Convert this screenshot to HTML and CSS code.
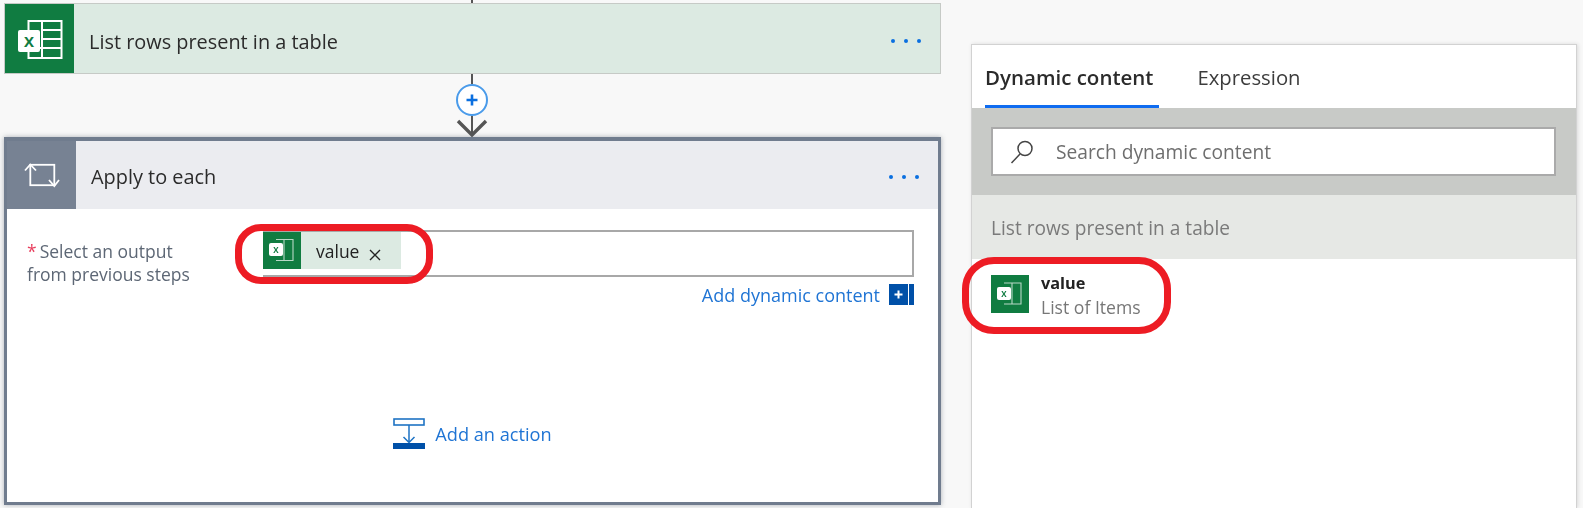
FILE: index.html
```html
<!DOCTYPE html>
<html lang="en">
<head>
<meta charset="utf-8">
<title>Apply to each</title>
<link rel="stylesheet" href="styles.css">
</head>
<body>
<main class="canvas">
  <section class="flow">
    <div class="stub"></div>
    <article class="card card-excel">
      <div class="card-icon card-icon-excel">
        <svg width="68" height="68" viewBox="1 1 68 68">
          <rect x="23.500" y="17" width="33" height="37" fill="none" stroke="#fff" stroke-width="2"/>
          <path d="M37 17v37M37 26h19M37 35h19M37 44h19M24 44h13" stroke="#fff" stroke-width="2" fill="none"/>
          <rect x="13" y="26" width="22" height="22" rx="2" fill="#fff"/>
          <text x="24" y="42.500" class="xl-x">X</text>
        </svg>
      </div>
      <h2 class="card-title">List rows present in a table</h2>
      <div class="dots"><i></i><i></i><i></i></div>
    </article>
    <div class="connector">
      <span class="plus">
        <svg width="16" height="16" viewBox="0 0 16 16"><path d="M8 2.500v11M2.500 8h11" stroke="#0a6fe0" stroke-width="2.600"/></svg>
      </span>
      <svg class="arrow" width="32" height="21" viewBox="0 0 32 21"><path d="M16 0v18" stroke="#555" stroke-width="2"/><path d="M2 5l14 14L30 5" fill="none" stroke="#555" stroke-width="3.400"/></svg>
    </div>
    <article class="card card-loop">
      <header class="loop-head">
        <div class="card-icon card-icon-loop">
          <svg width="36" height="26" viewBox="0 0 36 26" fill="none" stroke="#fff" stroke-width="1.800">
            <rect x="6.300" y="2.800" width="24" height="20.400"/>
            <path d="M1 8.500l5.300-6 5.700 6M25 18l5.300 6 4.700-6"/>
          </svg>
        </div>
        <h2 class="card-title">Apply to each</h2>
        <div class="dots"><i></i><i></i><i></i></div>
      </header>
      <div class="loop-body">
        <div class="form-row">
          <label class="form-label"><span class="req">*</span>Select an output<br>from previous steps</label>
          <div class="form-side">
            <div class="field">
              <span class="chip">
                <span class="chip-icon">
                  <svg width="38" height="37" viewBox="0 0 38 37">
                    <path d="M13 7.500h17v21H13M21 7.500v21" fill="none" stroke="#fff" stroke-opacity=".7" stroke-width="1.100"/>
                    <rect x="6" y="11" width="14" height="13" rx="2" fill="#fff"/>
                    <text x="13" y="21" class="xl-small-x">X</text>
                  </svg>
                </span>
                <span class="chip-text">value</span>
                <span class="chip-x">
                  <svg width="12" height="12" viewBox="0 0 12 12"><path d="M1 1l10 10M11 1L1 11" stroke="#222" stroke-width="1.400"/></svg>
                </span>
              </span>
              <span class="ring ring-chip"></span>
            </div>
            <div class="add-dyn">
              <span>Add dynamic content</span>
              <span class="add-dyn-icon">
                <svg width="25" height="21" viewBox="0 0 25 21"><rect width="19" height="21" fill="#0050a8"/><rect x="20" width="5" height="21" fill="#0050a8"/><path d="M9.500 6.500v8M5.500 10.500h8" stroke="#fff" stroke-width="2"/></svg>
              </span>
            </div>
          </div>
        </div>
        <div class="add-action">
          <svg width="32" height="32" viewBox="0 0 32 32" fill="none">
            <rect x="1" y="1" width="30" height="6" fill="#fff" stroke="#1e73c4" stroke-width="1.600"/>
            <path d="M16 7v17M10.500 19l5.500 5.500 5.500-5.500" stroke="#1e73c4" stroke-width="1.500"/>
            <rect x="0" y="25" width="32" height="6" fill="#0050a8"/>
          </svg>
          <span>Add an action</span>
        </div>
      </div>
    </article>
  </section>
  <aside class="panel">
    <nav class="tabs">
      <div class="tab tab-active">Dynamic content</div>
      <div class="tab">Expression</div>
    </nav>
    <div class="search-band">
      <div class="search">
        <svg width="24" height="26" viewBox="0 0 24 26" fill="none" stroke="#444" stroke-width="1.500"><circle cx="15" cy="9.500" r="7"/><path d="M10 15L1.500 24"/></svg>
        <span>Search dynamic content</span>
      </div>
    </div>
    <div class="group-head">List rows present in a table</div>
    <div class="item">
      <span class="item-icon">
        <svg width="38" height="38" viewBox="0 0 38 38">
          <path d="M13 8h17v21H13M21 8v21" fill="none" stroke="#fff" stroke-opacity=".7" stroke-width="1.100"/>
          <rect x="6" y="12" width="14" height="13" rx="2" fill="#fff"/>
          <text x="13" y="22" class="xl-small-x">X</text>
        </svg>
      </span>
      <div class="item-text">
        <div class="item-name">value</div>
        <div class="item-sub">List of Items</div>
      </div>
      <span class="ring ring-item"></span>
    </div>
  </aside>
</main>
</body>
</html>
```
FILE: styles.css
```css
* { box-sizing: border-box; }
html, body { margin: 0; height: 100%; }
body {
  background: #f8f8f8;
  overflow: hidden;
  font-family: "Open Sans", "Noto Sans", sans-serif;
  color: #2b2b2b;
}
svg { display: block; }
.xl-x { font: 700 15px "Open Sans", sans-serif; fill: #107c41; text-anchor: middle; }
.xl-small-x { font: 700 8px "Open Sans", sans-serif; fill: #107c41; text-anchor: middle; }

.canvas { display: flex; align-items: flex-start; height: 508px; filter: blur(.35px); }
.flow { width: 937px; margin-left: 4px; flex: none; display: flex; flex-direction: column; }
.stub { width: 2px; height: 3px; background: #555; margin-left: 467px; }

.card { display: flex; }
.card-excel {
  height: 71px;
  background: #dceae2;
  border: 1px solid #c6cac6;
  align-items: center;
}
.card-icon { flex: none; display: flex; align-items: center; justify-content: center; }
.card-icon-excel { width: 69px; height: 69px; background: #107c41; }
.card-title { margin: 6px 0 0 15px; flex: 1; font-size: 19.900px; font-weight: 400; color: #2b2b2b; }
.dots { display: flex; gap: 9px; margin: 4px 19px 0 0; }
.dots i { width: 4px; height: 4px; border-radius: 50%; background: #0a6fe0; }

.connector { height: 63px; display: flex; flex-direction: column; align-items: center; width: 935px; }
.connector::before { content: ""; width: 2px; height: 10px; background: #555; flex: none; }
.plus {
  width: 32px; height: 32px; border-radius: 50%;
  border: 2px solid #4a9bea; background: #fff;
  display: flex; align-items: center; justify-content: center;
  flex: none;
}
.arrow { flex: none; }

.card-loop {
  flex-direction: column;
  height: 368px;
  border: 3px solid #707c8e;
  border-top-width: 4px;
  background: #fff;
  box-shadow: 0 0 5px rgba(80, 90, 105, .45);
}
.loop-head { display: flex; align-items: center; height: 68px; background: #ebecf0; flex: none; }
.card-icon-loop { width: 69px; height: 68px; background: #778293; }
.loop-head .card-title { margin: 2px 0 0 15px; }
.loop-head .dots { margin: 3px 19px 0 0; }

.loop-body { flex: 1; display: flex; flex-direction: column; }
.form-row { display: flex; padding: 21px 24px 0 20px; }
.form-label { width: 236px; flex: none; font-size: 17.500px; line-height: 23px; color: #5d6775; padding-top: 10px; }
.req { color: #e8405f; margin-right: 3px; }
.form-side { flex: 1; display: flex; flex-direction: column; }
.field {
  position: relative;
  height: 47px;
  border: 2px solid #a8a8a8;
  border-left: 0;
  background: #fff;
}
.chip { display: inline-flex; align-items: center; height: 37px; width: 138px; background: #dceae2; vertical-align: top; }
.chip-icon { width: 38px; height: 37px; background: #107c41; flex: none; }
.chip-text { margin-left: 15px; font-size: 17.500px; color: #222; margin-top: 1px; }
.chip-x { margin-left: 10px; margin-top: 8px; }
.ring { position: absolute; border: 7px solid #ed1c24; pointer-events: none; }
.ring-chip { left: -28px; top: -8px; width: 198px; height: 60px; border-radius: 26px; }

.add-dyn { display: flex; justify-content: flex-end; align-items: center; gap: 9px; margin-top: 7px; color: #1f74d4; font-size: 18px; height: 21px; }

.add-action { margin-top: 113px; display: flex; align-items: center; justify-content: center; gap: 10px; color: #1f74d4; font-size: 18.200px; }

.panel {
  margin: 44px 0 0 30px;
  width: 606px;
  height: 464px;
  flex: none;
  background: #fff;
  border: 1px solid #d2d2d2;
  border-bottom: 0;
  box-shadow: 1px 0 4px rgba(0, 0, 0, .12);
}
.tabs { display: flex; height: 63px; padding-left: 13px; gap: 38px; }
.tab { font-size: 20.300px; color: #3c3c3c; line-height: 65px; height: 63px; padding: 0 6px 0 0; }
.tab-active { font-size: 20.500px; font-weight: 600; color: #2b2b2b; border-bottom: 3px solid #0f6cf0; }
.search-band { height: 87px; background: #c8cac7; padding: 19px 20px 0 19px; }
.search {
  height: 49px;
  background: #fff;
  border: 2px solid #aaa;
  display: flex;
  align-items: center;
  padding-left: 17px;
  gap: 22px;
  font-size: 19.200px;
  color: #6e6e6e;
}
.group-head { height: 64px; background: #e6e8e5; padding-left: 19px; line-height: 67px; font-size: 19.100px; color: #7a7a7a; }
.item { position: relative; display: flex; gap: 12px; padding: 16px 0 0 19px; }
.item-icon { width: 38px; height: 38px; background: #107c41; flex: none; }
.item-text { margin-top: -3px; }
.item-name { font-size: 16.300px; font-weight: 700; line-height: 22px; color: #222; }
.item-sub { font-size: 17.600px; line-height: 27px; color: #777; }
.ring-item { left: -10px; top: -2px; width: 209px; height: 77px; border-radius: 32px; }
```
